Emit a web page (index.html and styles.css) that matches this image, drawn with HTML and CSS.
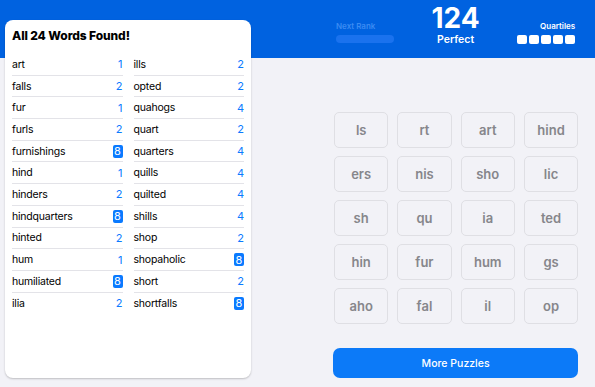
FILE: index.html
```html
<!DOCTYPE html>
<html>
<head>
<meta charset="utf-8">
<link rel="stylesheet" href="styles.css">
</head>
<body>
<div class="app">
  <section class="card">
    <h1 class="card-title">All 24 Words Found!</h1>
    <div class="lists">
      <ul class="list">
        <li class="row"><span>art</span><span class="num">1</span></li>
        <li class="row"><span>falls</span><span class="num">2</span></li>
        <li class="row"><span>fur</span><span class="num">1</span></li>
        <li class="row"><span>furls</span><span class="num">2</span></li>
        <li class="row"><span>furnishings</span><span class="num badge">8</span></li>
        <li class="row"><span>hind</span><span class="num">1</span></li>
        <li class="row"><span>hinders</span><span class="num">2</span></li>
        <li class="row"><span>hindquarters</span><span class="num badge">8</span></li>
        <li class="row"><span>hinted</span><span class="num">2</span></li>
        <li class="row"><span>hum</span><span class="num">1</span></li>
        <li class="row"><span>humiliated</span><span class="num badge">8</span></li>
        <li class="row"><span>ilia</span><span class="num">2</span></li>
      </ul>
      <ul class="list">
        <li class="row"><span>ills</span><span class="num">2</span></li>
        <li class="row"><span>opted</span><span class="num">2</span></li>
        <li class="row"><span>quahogs</span><span class="num">4</span></li>
        <li class="row"><span>quart</span><span class="num">2</span></li>
        <li class="row"><span>quarters</span><span class="num">4</span></li>
        <li class="row"><span>quills</span><span class="num">4</span></li>
        <li class="row"><span>quilted</span><span class="num">4</span></li>
        <li class="row"><span>shills</span><span class="num">4</span></li>
        <li class="row"><span>shop</span><span class="num">2</span></li>
        <li class="row"><span>shopaholic</span><span class="num badge">8</span></li>
        <li class="row"><span>short</span><span class="num">2</span></li>
        <li class="row"><span>shortfalls</span><span class="num badge">8</span></li>
      </ul>
    </div>
  </section>
  <main class="side">
    <header class="hud">
      <div class="rank">
        <div class="hud-label rank-label">Next Rank</div>
        <div class="rank-bar"></div>
      </div>
      <div class="score">
        <div class="score-num">124</div>
        <div class="score-rank">Perfect</div>
      </div>
      <div class="quartiles">
        <div class="hud-label">Quartiles</div>
        <div class="squares">
          <span class="sq"></span><span class="sq"></span><span class="sq"></span><span class="sq"></span><span class="sq"></span>
        </div>
      </div>
    </header>
    <div class="tiles">
      <div class="tile">ls</div><div class="tile">rt</div><div class="tile">art</div><div class="tile">hind</div>
      <div class="tile">ers</div><div class="tile">nis</div><div class="tile">sho</div><div class="tile">lic</div>
      <div class="tile">sh</div><div class="tile">qu</div><div class="tile">ia</div><div class="tile">ted</div>
      <div class="tile">hin</div><div class="tile">fur</div><div class="tile">hum</div><div class="tile">gs</div>
      <div class="tile">aho</div><div class="tile">fal</div><div class="tile">il</div><div class="tile">op</div>
    </div>
    <button class="more">More Puzzles</button>
  </main>
</div>
</body>
</html>
```

FILE: styles.css
```css
* { box-sizing: border-box; }
html, body {
  margin: 0;
  padding: 0;
}
body {
  width: 595px;
  height: 387px;
  overflow: hidden;
  font-family: Inter, "Liberation Sans", sans-serif;
  background: linear-gradient(to bottom, #0062e0 0, #0062e0 58px, #f2f2f7 58px, #f2f2f7 100%);
  color: #000;
}
.app {
  display: flex;
  height: 387px;
}
.card {
  width: 246px;
  flex: none;
  margin: 20px 0 9px 5px;
  padding: 8px 7px;
  background: #fff;
  border-radius: 8px;
  box-shadow: 0 1px 2px rgba(0, 0, 0, 0.22);
}
.card-title {
  margin: 0;
  font-size: 12px;
  line-height: 16px;
  font-weight: 800;
  letter-spacing: -0.1px;
}
.lists {
  margin-top: 10px;
  display: grid;
  grid-template-columns: 1fr 1fr;
  column-gap: 11px;
}
.list {
  list-style: none;
  margin: 0;
  padding: 0;
}
.row {
  height: 21.7px;
  display: flex;
  align-items: center;
  justify-content: space-between;
  font-size: 10.5px;
  letter-spacing: -0.2px;
  border-bottom: 1px solid #e3e3e8;
}
.row:last-child { border-bottom: none; }
.num {
  color: #0a7aff;
  font-size: 11px;
  letter-spacing: 0;
}
.badge {
  width: 10px;
  height: 13px;
  border-radius: 2px;
  background: #0a7aff;
  color: #fff;
  display: flex;
  align-items: center;
  justify-content: center;
}
.side {
  flex: 1;
  padding: 0 17px 0 82px;
  display: flex;
  flex-direction: column;
}
.hud {
  height: 58px;
  display: grid;
  grid-template-columns: 1fr auto 1fr;
  align-items: start;
  color: #fff;
}
.hud-label {
  font-size: 8px;
  line-height: 10px;
  font-weight: 600;
}
.rank {
  padding: 21px 0 0 3px;
}
.rank-label { color: #3b8bf2; }
.rank-bar {
  margin-top: 4px;
  width: 58px;
  height: 8px;
  border-radius: 4px;
  background: #1a72ee;
}
.score {
  padding-top: 6px;
  text-align: center;
}
.score-num {
  font-size: 28px;
  line-height: 24px;
  font-weight: 700;
}
.score-rank {
  font-size: 10.5px;
  line-height: 12px;
  font-weight: 600;
  margin-top: 4px;
}
.quartiles {
  padding: 21px 3px 0 0;
  display: flex;
  flex-direction: column;
  align-items: flex-end;
}
.squares {
  margin-top: 4px;
  display: flex;
  gap: 2px;
}
.sq {
  width: 10px;
  height: 8.5px;
  border-radius: 2px;
  background: #fff;
}
.tiles {
  margin-top: 54px;
  padding-left: 1px;
  display: grid;
  grid-template-columns: repeat(4, 54.3px);
  grid-auto-rows: 36px;
  column-gap: 9px;
  row-gap: 8px;
}
.tile {
  border: 1px solid #dfdfe4;
  border-radius: 5px;
  display: flex;
  align-items: center;
  justify-content: center;
  color: #86868b;
  font-size: 13px;
  font-weight: 600;
}
.more {
  margin-top: 24px;
  height: 30px;
  border: none;
  border-radius: 7px;
  background: #0c7af8;
  color: #fff;
  font-family: Inter, "Liberation Sans", sans-serif;
  font-size: 10.5px;
  font-weight: 500;
  padding: 0;
}
```
